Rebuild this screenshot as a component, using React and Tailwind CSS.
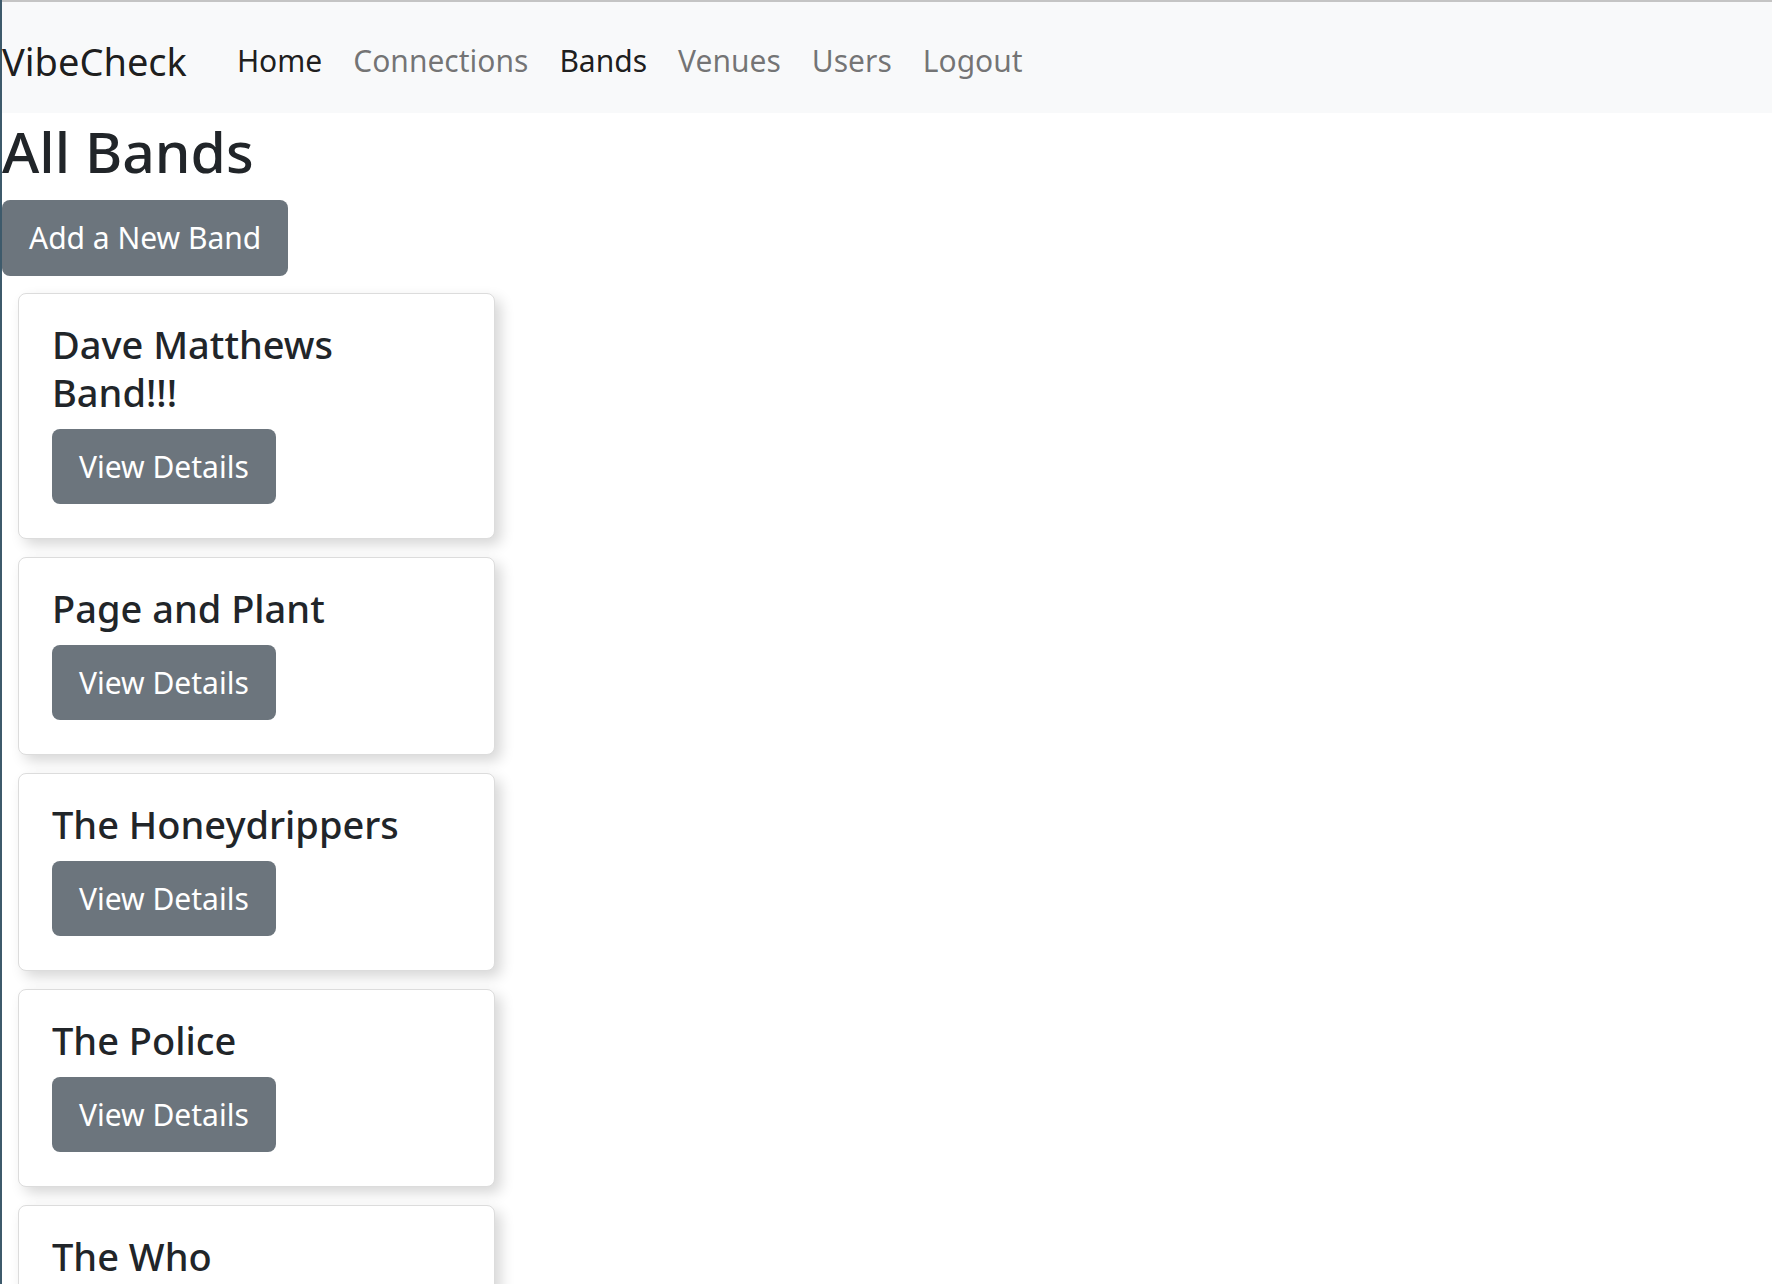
import React from 'react';

const bands = [
  { id: 1, name: 'Dave Matthews Band!!!' },
  { id: 2, name: 'Page and Plant' },
  { id: 3, name: 'The Honeydrippers' },
  { id: 4, name: 'The Police' },
  { id: 5, name: 'The Who' },
];

const navLinks = [
  { label: 'Home', active: true },
  { label: 'Connections', active: false },
  { label: 'Bands', active: true },
  { label: 'Venues', active: false },
  { label: 'Users', active: false },
  { label: 'Logout', active: false },
];

const BandCard = ({ band }) => (
  <div className="bg-white border border-[#dcdcdc] rounded-lg shadow-[6px_6px_14px_rgba(0,0,0,0.16)] px-[33px] pt-[26px] pb-[34px]">
    <h5 className="text-[38px] leading-[48px] font-medium mb-[13px]">{band.name}</h5>
    <button className="h-[75px] px-[27px] rounded-lg bg-[#6c757d] text-white text-[30px] leading-none">
      View Details
    </button>
  </div>
);

const App = () => {
  return (
    <div className="min-h-screen bg-white border-l-2 border-[#3d5a6b] text-[#212529] font-['Noto_Sans',sans-serif]">
      <nav className="h-[113px] bg-[#f8f9fa] border-t-2 border-[#c4c4c4] pt-[6px] flex items-center">
        <a href="#" className="text-[38px] leading-none text-black/90 mr-[50px]">VibeCheck</a>
        <ul className="flex items-center gap-[31px]">
          {navLinks.map((link) => (
            <li key={link.label} className="leading-none">
              <a
                href="#"
                className={`text-[30px] leading-none ${link.active ? 'text-black/90' : 'text-black/55'}`}
              >
                {link.label}
              </a>
            </li>
          ))}
        </ul>
      </nav>

      <main>
        <h1 className="text-[57px] leading-[76px] font-medium mb-[11px]">All Bands</h1>
        <button className="h-[76px] px-[27px] rounded-lg bg-[#6c757d] text-white text-[30px] leading-none">
          Add a New Band
        </button>

        <div className="mt-[17px] ml-[16px] w-[477px] flex flex-col gap-[18px] pb-10">
          {bands.map((band) => (
            <BandCard key={band.id} band={band} />
          ))}
        </div>
      </main>
    </div>
  );
};

export default App;
